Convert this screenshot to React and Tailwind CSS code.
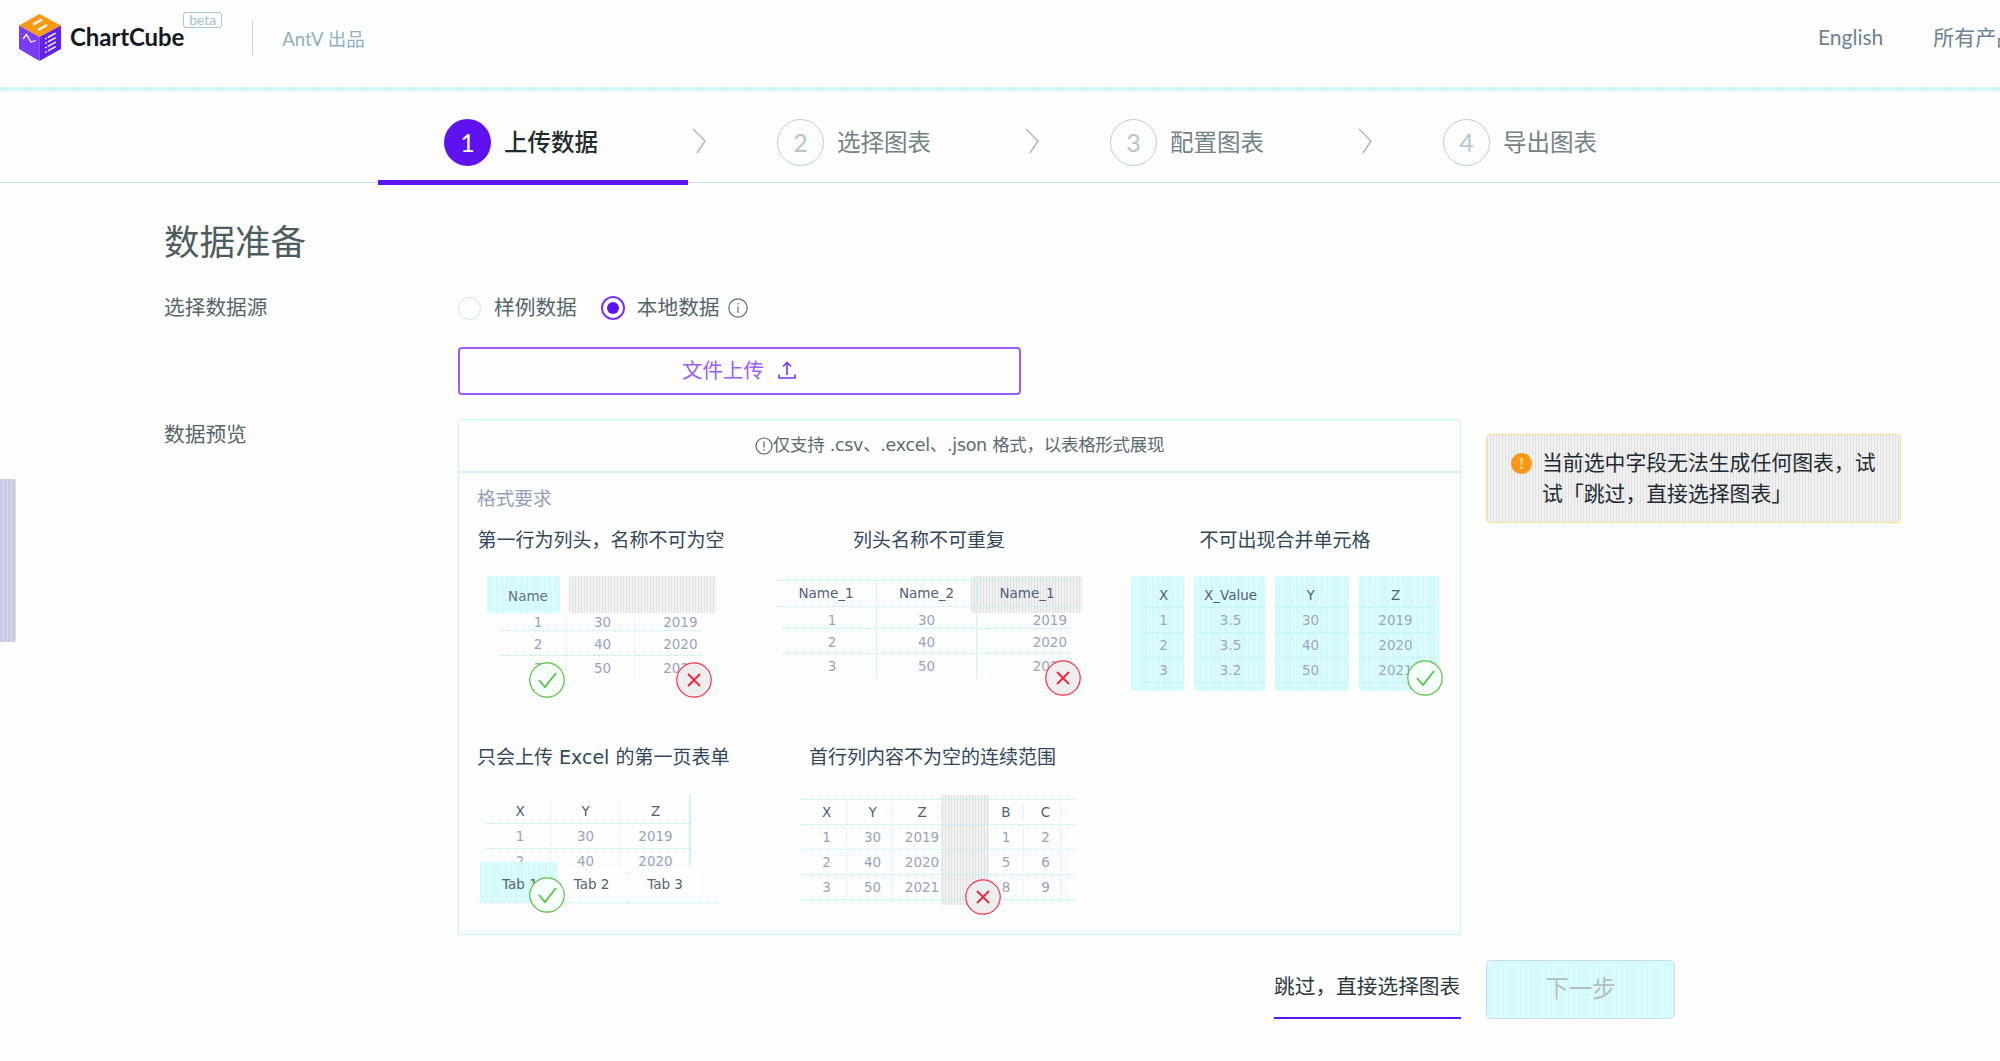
const CYAN = 'bg-[repeating-linear-gradient(90deg,#ccfcff_0,#ccfcff_2px,#eefeff_2px,#eefeff_3px)]'
const GRAY = 'bg-[repeating-linear-gradient(90deg,#e0e0e0_0,#e0e0e0_1px,#f1f1f1_1px,#f1f1f1_3px)]'
const CJK = 'font-["Lato","Noto_Sans_CJK_SC",sans-serif]'
const MINI = 'font-["DejaVu_Sans",sans-serif] text-[13.5px]'
const HEAD = 'text-[#4f5f78]'
const VAL = 'text-[#98a3bd]'
const ROW_LINE = 'border-b border-dotted border-[#a6f2f8]'

function Logo() {
  return (
    <svg width="42" height="47" viewBox="0 0 42 47" className="shrink-0">
      <path d="M20.5 0 42 11.5 20.5 23 0 11.5Z" fill="#fa9a14" />
      <path d="M0 11.5 20.5 23V47L0 35Z" fill="#7a3cf5" />
      <path d="M42 11.5 20.5 23V47L42 35Z" fill="#6420ee" />
      <path d="M14 10.5 23 5.5M19 16 28 11" stroke="#fff" strokeWidth="2.2" fill="none" />
      <path d="M4 25 7.5 20.5 12 28 16.5 26.5" stroke="#fff" strokeWidth="1.3" fill="none" />
      <path d="M26 25 37 19M26 29.5 37 23.5M26 34 37 28M26 38.5 37 32.5" stroke="#fff" strokeWidth="1.4" strokeDasharray="2 1.2 7 0" fill="none" />
    </svg>
  )
}

function Step({ n, label, active }) {
  return (
    <div className={`h-[94px] w-[310px] pt-[28px] pl-[66px] ${active ? 'border-b-[5px] border-[#5e12f0]' : ''}`}>
      <div className="flex items-center">
        <span
          className={`flex size-[47px] items-center justify-center rounded-full text-[25px] ${
            active ? 'bg-[#5e12f0] text-white' : 'border border-[#b7cfd3] text-[#b3c8cc]'
          }`}
        >
          {n}
        </span>
        <span className={`ml-[13px] text-[23.5px] ${active ? 'font-medium text-[#1d2c2c]' : 'text-[#738383]'}`}>{label}</span>
      </div>
    </div>
  )
}

function Arrow() {
  return (
    <div className="h-[94px] w-[23px] pt-[37px] pl-[4px]">
      <svg width="14" height="26" viewBox="0 0 14 26" fill="none" stroke="#a9b6b8" strokeWidth="1.4">
        <path d="M1 1 13 13 5 25" />
      </svg>
    </div>
  )
}

function Mark({ ok, className }) {
  return (
    <svg width="36" height="36" viewBox="0 0 36 36" className={`absolute ${className}`}>
      <circle cx="18" cy="18" r="17.2" fill={ok ? '#f6fffd' : '#eeeeee'} stroke={ok ? '#55c43c' : '#f5344e'} strokeWidth="1.2" />
      {ok ? (
        <path d="M10 18 16 25 27 11" fill="none" stroke="#55c43c" strokeWidth="1.8" />
      ) : (
        <path d="M12 12 24 24M24 12 12 24" fill="none" stroke="#f5223d" strokeWidth="1.8" />
      )}
    </svg>
  )
}

function Title({ children, className = '' }) {
  return <div className={`h-[30px] text-[19px] leading-[30px] whitespace-nowrap text-[#33475b] ${className}`}>{children}</div>
}

function EmptyName() {
  return (
    <div className={`relative h-[123px] w-[229px] ${MINI}`}>
      <div className="flex h-[37px]">
        <div className={`flex w-[73px] items-center justify-center rounded-[2px] pt-[3px] pl-[10px] text-[#66707a] ${CYAN}`}>Name</div>
        <div className={`ml-[9px] w-[147px] rounded-[3px] ${GRAY}`} />
      </div>
      <div className={`ml-[13px] w-[202px] ${VAL}`}>
        {[
          ['1', '30', '2019', 'h-[18px] leading-[18px]'],
          ['2', '40', '2020', 'h-[25px] leading-[27px]'],
          ['3', '50', '2021', 'h-[24px] leading-[24px]'],
        ].map(([a, b, c, h], i) => (
          <div key={a} className={`grid grid-cols-[67px_68px_67px] ${h} ${i < 2 ? ROW_LINE : ''}`}>
            <span className="border-r border-[#eef2f4] pl-[11px] text-center">{a}</span>
            <span className="border-r border-[#eef2f4] pl-[5px] text-center">{b}</span>
            <span className="pr-[4px] text-right">{c}</span>
          </div>
        ))}
      </div>
      <Mark ok className="top-[86px] left-[42px]" />
      <Mark className="top-[86px] left-[189px]" />
    </div>
  )
}

function DuplicateName() {
  return (
    <div className={`relative h-[123px] w-[306px] pt-[4px] ${MINI}`}>
      <div className={`absolute top-0 left-[195px] h-[37px] w-[111px] rounded-[3px] ${GRAY}`} />
      <div className={`relative grid h-[27px] grid-cols-[101px_100px_105px] items-center border-y border-dotted border-[#a6f2f8] ${HEAD}`}>
        <span className="border-r border-[#bff8fc] text-center">Name_1</span>
        <span className="border-r border-[#bff8fc] text-center">Name_2</span>
        <span className="pr-[5px] text-center">Name_1</span>
      </div>
      <div className={`ml-[7px] w-[288px] ${VAL}`}>
        {[
          ['1', '30', '2019', 'h-[22px] leading-[26px]'],
          ['2', '40', '2020', 'h-[25px] leading-[27px]'],
          ['3', '50', '2021', 'h-[24px] leading-[25px]'],
        ].map(([a, b, c, h], i) => (
          <div key={a} className={`grid grid-cols-[94px_100px_94px] ${h} ${i < 2 ? ROW_LINE : ''}`}>
            <span className="border-r border-[#bff8fc] pl-[5px] text-center">{a}</span>
            <span className="border-r border-[#bff8fc] text-center">{b}</span>
            <span className="pr-[4px] text-right">{c}</span>
          </div>
        ))}
      </div>
      <Mark className="top-[84px] left-[269px]" />
    </div>
  )
}

function NoMerge() {
  const cols = [
    { w: 'w-[53px]', pad: 'pl-[13px]', cells: ['X', '1', '2', '3'] },
    { w: 'w-[71px]', pad: 'pl-[3px]', cells: ['X_Value', '3.5', '3.5', '3.2'] },
    { w: 'w-[74px]', pad: 'pr-[2px]', cells: ['Y', '30', '40', '50'] },
    { w: 'w-[81px]', pad: 'pr-[7px]', cells: ['Z', '2019', '2020', '2021'] },
  ]
  return (
    <div className={`relative mt-[1px] flex h-[122px] w-[309px] gap-[10px] ${MINI}`}>
      {cols.map((col) => (
        <div key={col.cells[0]} className={`${col.w} h-[115px] rounded-[3px] ${col.pad} ${CYAN}`}>
          <div className={`h-[32px] border-b border-dotted border-[#a6f2f8] pt-[10px] text-center leading-[18px] ${HEAD}`}>{col.cells[0]}</div>
          {col.cells.slice(1).map((c, i) => (
            <div key={i} className="h-[25px] border-b border-dotted border-[#a6f2f8] text-center leading-[25px] text-[#a0a5bd]">{c}</div>
          ))}
        </div>
      ))}
      <Mark ok className="top-[84px] left-[276px]" />
    </div>
  )
}

function FirstSheet() {
  return (
    <div className={`relative h-[110px] w-[241px] ${MINI}`}>
      <div className="ml-[9px] h-[80px] w-[204px] overflow-hidden border-r-2 border-[#c6f7fa] pt-[4px]">
        {[
          ['X', 'Y', 'Z', HEAD],
          ['1', '30', '2019', VAL],
          ['2', '40', '2020', VAL],
        ].map(([a, b, c, color]) => (
          <div key={a} className={`grid h-[25px] grid-cols-[65px_68px_71px] items-center text-center ${ROW_LINE} ${color}`}>
            <span className="border-r border-dotted border-[#bff8fc] pl-[2px]">{a}</span>
            <span className="border-r border-dotted border-[#bff8fc]">{b}</span>
            <span>{c}</span>
          </div>
        ))}
      </div>
      <div className="absolute top-[67px] left-0 flex h-[41px] w-full items-start border-b border-dotted border-[#a6f2f8] pl-[2px] text-[#56626e]">
        <div className={`h-[40px] w-[77px] pt-[12px] pl-[22px] whitespace-nowrap ${CYAN}`}>Tab 1</div>
        <div className="mt-[5px] flex h-[35px] w-[69px] items-center justify-center bg-[#fdfeff]">Tab 2</div>
        <div className="mt-[5px] ml-[5px] flex h-[35px] w-[68px] items-center justify-center bg-[#fdfeff]">Tab 3</div>
      </div>
      <Mark ok className="top-[82px] left-[51px]" />
    </div>
  )
}

function ContinuousRange() {
  const rows = [
    ['X', 'Y', 'Z', 'B', 'C', HEAD],
    ['1', '30', '2019', '1', '2', VAL],
    ['2', '40', '2020', '5', '6', VAL],
    ['3', '50', '2021', '8', '9', VAL],
  ]
  return (
    <div className={`relative h-[110px] w-[274px] pt-[4px] ${MINI}`}>
      <div className={`absolute top-0 left-[140px] h-[110px] w-[47px] ${GRAY}`} />
      <div className="relative border-t border-dotted border-[#a6f2f8]">
        {rows.map(([a, b, c, d, e, color]) => (
          <div key={a} className={`grid h-[25px] grid-cols-[45px_45px_50px_47px_35px_38px_14px] items-center text-center ${ROW_LINE} ${color}`}>
            <span className="border-r border-[#d6fafc] pl-[5px]">{a}</span>
            <span className="border-r border-[#d6fafc] pl-[7px]">{b}</span>
            <span className="border-r border-[#d6fafc] pl-[11px]">{c}</span>
            <span className="border-r border-[#d6fafc]">&nbsp;</span>
            <span className="border-r border-[#d6fafc]">{d}</span>
            <span className="border-r border-[#d6fafc] pl-[6px]">{e}</span>
            <span />
          </div>
        ))}
      </div>
      <Mark className="top-[84px] left-[163px]" />
    </div>
  )
}

export default function App() {
  return (
    <div className={`relative h-[1061px] w-[2000px] overflow-hidden bg-[#fdfdfe] ${CJK}`}>
      <div className="absolute top-[479px] left-0 h-[163px] w-[16px] rounded-r-[3px] bg-[repeating-linear-gradient(90deg,#c8c8ea_0,#c8c8ea_3px,#dcdcd4_3px,#dcdcd4_4px)]" />

      <header className="flex h-[87px] items-center pb-[13px] pl-[19px]">
        <Logo />
        <span className="ml-[9px] text-[24px] font-bold tracking-[-0.1px] text-[#151a22]">ChartCube</span>
        <span className="mb-[34px] ml-[-1px] flex h-[16px] w-[39px] items-center justify-center rounded-[3px] border border-[#a9c6d6] text-[14px] leading-none text-[#a5c1cf]">
          beta
        </span>
        <div className="ml-[30px] h-[35px] w-px bg-[#cfd4d6]" />
        <span className="mt-[5px] ml-[29px] text-[18.5px] text-[#8fb0bf]">AntV 出品</span>
        <div className="ml-auto flex w-[182px] shrink-0 items-center overflow-hidden text-[21px] whitespace-nowrap text-[#6d8290]">
          <span>English</span>
          <span className="ml-[50px]">所有产品</span>
        </div>
      </header>
      <div className="h-[4px] bg-[repeating-linear-gradient(90deg,#c3f5fb_0,#c3f5fb_2px,#f4feff_2px,#f4feff_3px)]" />

      <nav className="flex h-[92px] items-start border-b border-[#c9e3ea] pl-[378px]">
        <Step n={1} label="上传数据" active />
        <Arrow />
        <Step n={2} label="选择图表" />
        <Arrow />
        <Step n={3} label="配置图表" />
        <Arrow />
        <Step n={4} label="导出图表" />
      </nav>

      <main className="pt-[34px] pl-[164px]">
        <h1 className="h-[50px] text-[35.5px] leading-[50px] text-[#4d5c5c]">数据准备</h1>

        <div className="mt-[26px] flex h-[30px] items-center text-[20.7px] text-[#55656a]">
          <span className="w-[294px]">选择数据源</span>
          <span className="size-[23px] rounded-full border border-[#cfe3e5]" />
          <span className="ml-[13px]">样例数据</span>
          <span className="ml-[24px] flex size-[24px] items-center justify-center rounded-full border-2 border-[#7b35f5]">
            <span className="size-[12px] rounded-full bg-[#5e12f0]" />
          </span>
          <span className="ml-[12px]">本地数据</span>
          <svg width="20" height="20" viewBox="0 0 20 20" fill="none" stroke="#66757a" strokeWidth="1.2" className="ml-[8px]">
            <circle cx="10" cy="10" r="9.2" />
            <path d="M10 8.5V15M10 5V6.6" />
          </svg>
        </div>

        <button className="mt-[24px] ml-[294px] flex h-[48px] w-[563px] items-center justify-center rounded-[4px] border-2 border-[#9a5df7] pb-[2px] text-[20.5px] text-[#9a5df7]">
          文件上传
          <svg width="20" height="20" viewBox="0 0 20 20" fill="none" strokeWidth="1.6" className="ml-[13px]">
            <path d="M2 14.5V18H18V14.5" stroke="#7b35f5" />
            <path d="M10 15V2.5M6 6.5 10 2.5 14 6.5" stroke="#7b35f5" />
          </svg>
        </button>

        <div className="mt-[24px] flex items-start">
          <span className="h-[30px] w-[294px] text-[20.7px] leading-[30px] text-[#55656a]">数据预览</span>

          <section className="h-[516px] w-[1003px] rounded-[2px] border border-[#c6f4f7]">
            <div className="flex h-[53px] items-center justify-center border-b-2 border-[#d9eff2] font-['DejaVu_Sans','Noto_Sans_CJK_SC',sans-serif] text-[17.5px] tracking-[-0.3px] text-[#5c6b70]">
              <svg width="18" height="18" viewBox="0 0 18 18" fill="none" stroke="#54636a" strokeWidth="1.2" className="shrink-0">
                <circle cx="9" cy="9" r="8" />
                <path d="M9 4.5V10.5M9 12.2V13.8" />
              </svg>
              <span>仅支持 .csv、.excel、.json 格式，以表格形式展现</span>
            </div>
            <div className="pt-[10px] pl-[18px]">
              <div className="h-[30px] text-[18.7px] leading-[30px] text-[#92a0b8]">格式要求</div>

              <div className="mt-[12px] flex h-[217px] items-start">
                <div className="flex w-[248px] flex-col items-center">
                  <Title>第一行为列头，名称不可为空</Title>
                  <div className="mt-[21px]"><EmptyName /></div>
                </div>
                <div className="ml-[34px] flex w-[340px] flex-col items-center">
                  <Title>列头名称不可重复</Title>
                  <div className="mt-[21px]"><DuplicateName /></div>
                </div>
                <div className="ml-[31px] flex w-[310px] flex-col items-center">
                  <Title>不可出现合并单元格</Title>
                  <div className="mt-[20px]"><NoMerge /></div>
                </div>
              </div>

              <div className="flex items-start">
                <div className="flex w-[251px] flex-col items-start">
                  <Title className="font-['DejaVu_Sans','Noto_Sans_CJK_SC',sans-serif]">只会上传 Excel 的第一页表单</Title>
                  <div className="mt-[23px] ml-px"><FirstSheet /></div>
                </div>
                <div className="ml-[74px] flex flex-col items-start">
                  <div className="ml-[7px]"><Title>首行列内容不为空的连续范围</Title></div>
                  <div className="mt-[23px]"><ContinuousRange /></div>
                </div>
              </div>
            </div>
          </section>

          <aside className={`mt-[15px] ml-[25px] flex h-[89px] w-[415px] items-start rounded-[4px] border border-[#fbe08e] pt-[12px] pl-[24px] ${GRAY}`}>
            <span className="mt-[6px] flex size-[21px] shrink-0 items-center justify-center rounded-full bg-[#fa9618] text-[15px] leading-none font-bold text-[#ffe9a0]">!</span>
            <p className="ml-[10px] w-[344px] text-[20.85px] leading-[30.5px] text-[#202a30]">当前选中字段无法生成任何图表，试试「跳过，直接选择图表」</p>
          </aside>
        </div>

        <div className="mt-[25px] ml-[1110px] flex items-start">
          <a className="flex h-[59px] w-[187px] items-center border-b-2 border-[#5e12f0] pb-[3px] text-[20.7px] whitespace-nowrap text-[#2c3a3c]">跳过，直接选择图表</a>
          <button className={`ml-[25px] h-[59px] w-[189px] rounded-[5px] border border-[#cfdce8] pb-[2px] text-[23.5px] text-[#b4bcbc] ${CYAN}`}>下一步</button>
        </div>
      </main>
    </div>
  )
}
